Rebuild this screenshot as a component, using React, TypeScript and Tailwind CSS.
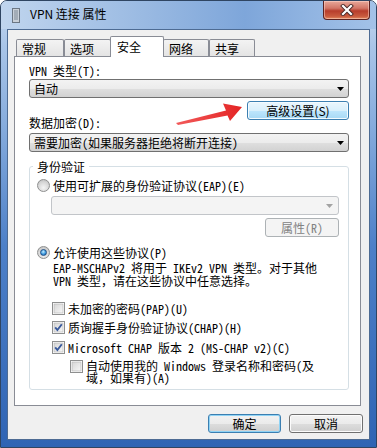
import React from 'react';

// SimSun-like metrics: half-width latin, full-width CJK
const sim = "font-['Noto_Sans_Mono_CJK_SC','Noto_Sans_CJK_SC','Noto_Sans',monospace]";
const ui = "font-['Noto_Sans_CJK_SC','Noto_Sans',sans-serif]";

const Combo: React.FC<{ text?: string; disabled?: boolean; className?: string }> = ({ text, disabled, className = '' }) => (
  <div
    className={`h-[19px] flex items-center rounded-[3px] border pl-[4px] pr-[4px] ${
      disabled
        ? 'border-[#c2c5c9] bg-[#f4f4f4] pr-[5px]'
        : 'border-[#707070] bg-[linear-gradient(#f3f3f3_0%,#ececec_50%,#dfdfdf_51%,#d2d2d2_100%)]'
    } ${className}`}
  >
    <span className="flex-1 leading-[13px] whitespace-nowrap">{text}</span>
    <svg width="7" height="4" viewBox="0 0 7 4">
      <path d="M0 0h7L3.5 4z" fill={disabled ? '#a3a3a3' : '#000'} />
    </svg>
  </div>
);

type BtnKind = 'hot' | 'default' | 'normal' | 'disabled';

const Btn: React.FC<{ kind: BtnKind; className?: string; children: React.ReactNode }> = ({ kind, className = '', children }) => {
  const look = {
    hot: 'border-[#3c7fb1] bg-[linear-gradient(#eaf6fd_0%,#d9f0fc_50%,#bee6fd_51%,#a7d9f5_100%)] shadow-[inset_0_0_0_1px_#f4fbff]',
    default: 'border-[#3c7fb1] bg-[linear-gradient(#f2f2f2_0%,#ebebeb_50%,#dddddd_51%,#cfcfcf_100%)] shadow-[inset_0_0_0_1px_#8fd3f5]',
    normal: 'border-[#707070] bg-[linear-gradient(#f2f2f2_0%,#ebebeb_50%,#dddddd_51%,#cfcfcf_100%)] shadow-[inset_0_0_0_1px_#fcfcfc]',
    disabled: 'border-[#adb2b5] bg-[#f4f4f4] text-[#838383]',
  }[kind];
  return (
    <div className={`h-[19px] flex items-center justify-center rounded-[3px] border leading-[13px] ${look} ${className}`}>
      {children}
    </div>
  );
};

const Radio: React.FC<{ checked?: boolean }> = ({ checked }) => (
  <span className="w-[13px] h-[13px] shrink-0 rounded-full border border-[#8e8f8f] bg-[radial-gradient(circle_at_50%_70%,#f4f4f4_0%,#d8d8d8_55%,#b9b9b9_100%)] flex items-center justify-center">
    {checked && (
      <span className="w-[7px] h-[7px] rounded-full border border-[#1f4f86] bg-[radial-gradient(circle_at_45%_35%,#c4ecfd_0%,#3d9ae0_55%,#17579e_100%)]" />
    )}
  </span>
);

const Check: React.FC<{ checked?: boolean }> = ({ checked }) => (
  <svg width="13" height="13" viewBox="0 0 13 13" className="shrink-0">
    <defs>
      <linearGradient id="cbg" x1="0" y1="0" x2="1" y2="1">
        <stop offset="0" stopColor="#d6d6d6" />
        <stop offset="1" stopColor="#f7f7f7" />
      </linearGradient>
    </defs>
    <rect x="0.5" y="0.5" width="12" height="12" fill="#fff" stroke="#8e8f8f" />
    <rect x="2" y="2" width="9" height="9" fill="url(#cbg)" stroke="#b3b3b3" strokeWidth="0.6" />
    {checked && <path d="M3.2 6.3 L5.4 9 L9.8 3.2" fill="none" stroke="#3a5a9c" strokeWidth="1.9" />}
  </svg>
);

const Tab: React.FC<{ label: string; w: string; active?: boolean }> = ({ label, w, active }) =>
  active ? (
    <div className={`${w} h-[21px] -mb-px relative z-10 -mx-px bg-white border border-b-0 border-[#898c95] rounded-t-[2px] pl-[6px] pt-[3px] leading-[13px]`}>
      {label}
    </div>
  ) : (
    <div className={`${w} h-[17px] bg-[linear-gradient(#f3f3f3,#e4e4e4)] border border-b-0 border-[#898c95] rounded-t-[2px] pl-[5px] pt-[2px] leading-[13px]`}>
      {label}
    </div>
  );

export default function App() {
  return (
    <div className="w-[377px] h-[448px] bg-white">
      <div
        className={`relative w-[377px] h-[448px] rounded-t-[7px] border border-[#2f4562] flex flex-col overflow-hidden text-[12px] text-black ${sim} bg-[linear-gradient(#c6d8ef_0%,#a9c5e8_10%,#86acdd_28%,#4d80c8_55%,#2f64b4_100%)]`}
      >
        {/* title bar */}
        <div className="h-[28px] shrink-0 flex items-start bg-[linear-gradient(90deg,#c0d5ee_0%,#9dbce3_35%,#7ea6da_65%,#a3c2e8_100%)]">
          <svg width="8" height="15" viewBox="0 0 8 15" className="ml-[11px] mt-[7px]">
            <rect x="0.5" y="0.5" width="7" height="14" fill="#c9d0d8" stroke="#6c7784" />
            <path d="M2 3h4M2 5h4M2 7h4M2 9h4M2 11h4" stroke="#7d8895" />
          </svg>
          <span className={`ml-[10px] mt-[6px] leading-[14px] text-[12px] text-black ${ui}`}>VPN 连接 属性</span>
          <div className="ml-auto mr-[6px] w-[47px] h-[19px] rounded-b-[4px] border border-t-0 border-[#5b2221] bg-[linear-gradient(#e8a89a_0%,#d27667_40%,#b73d2c_55%,#c95b3f_85%,#e48a5f_100%)] shadow-[inset_0_0_0_1px_rgba(255,220,210,0.5)] flex items-center justify-center">
            <svg width="14" height="12" viewBox="0 0 14 12">
              <path d="M3 2l8 8M11 2l-8 8" stroke="#4a2a28" strokeWidth="4" strokeLinecap="square" />
              <path d="M3 2l8 8M11 2l-8 8" stroke="#fff" strokeWidth="2.2" strokeLinecap="square" />
            </svg>
          </div>
        </div>

        {/* client area */}
        <div className="ml-[6px] w-[363px] h-[411px] border border-[#4d6b93] bg-[#f0f0f0] flex flex-col">
          <div className={`flex items-end pl-[8px] pt-[6px] ${ui}`}>
            <Tab label="常规" w="w-[48px]" />
            <Tab label="选项" w="w-[47px]" />
            <Tab label="安全" w="w-[54px]" active />
            <Tab label="网络" w="w-[46px]" />
            <Tab label="共享" w="w-[46px]" />
          </div>

          <div className="ml-[6px] w-[347px] h-[350px] border border-[#898c95] bg-white pl-[14px] pr-[11px] flex flex-col">
            <div className="mt-[7px] leading-[13px]">VPN 类型(T):</div>
            <Combo text="自动" className={`mt-[2px] ${ui}`} />
            <div className="mt-[3px] flex justify-end">
              <Btn kind="hot" className={`w-[102px] ${ui}`}>高级设置(S)</Btn>
            </div>
            <div className="-mt-[4px] leading-[13px]">数据加密(D):</div>
            <Combo text="需要加密(如果服务器拒绝将断开连接)" className="mt-[4px]" />

            <fieldset className="mt-[8px] w-[320px] border border-[#d5dfe5] rounded-[3px] p-0 m-0 min-w-0">
              <legend className={`ml-[3px] px-[4px] leading-[13px] ${ui}`}>身份验证</legend>
              <div className="pl-[7px] pr-[9px] pb-[5px] flex flex-col">
                <div className="mt-[6px] flex items-center gap-[3px] leading-[13px]">
                  <Radio />
                  <span className="whitespace-nowrap">使用可扩展的身份验证协议(EAP)(E)</span>
                </div>
                <Combo disabled className="mt-[4px] ml-[14px]" />
                <div className="mt-[3px] flex justify-end">
                  <Btn kind="disabled" className="w-[74px]">属性(R)</Btn>
                </div>
                <div className="mt-[9px] flex items-center gap-[3px] leading-[13px]">
                  <Radio checked />
                  <span className="whitespace-nowrap">允许使用这些协议(P)</span>
                </div>
                <div className="mt-[2px] ml-[16px] leading-[13px] whitespace-nowrap">
                  <div>EAP-MSCHAPv2 将用于 IKEv2 VPN 类型。对于其他</div>
                  <div>VPN 类型，请在这些协议中任意选择。</div>
                </div>
                <div className="mt-[15px] ml-[15px] flex items-center gap-[3px] leading-[13px]">
                  <Check />
                  <span className="whitespace-nowrap">未加密的密码(PAP)(U)</span>
                </div>
                <div className="mt-[6px] ml-[15px] flex items-center gap-[3px] leading-[13px]">
                  <Check checked />
                  <span className="whitespace-nowrap">质询握手身份验证协议(CHAP)(H)</span>
                </div>
                <div className="mt-[7px] ml-[15px] flex items-center gap-[3px] leading-[13px]">
                  <Check checked />
                  <span className="whitespace-nowrap">Microsoft CHAP 版本 2 (MS-CHAP v2)(C)</span>
                </div>
                <div className="mt-[6px] ml-[33px] flex items-start gap-[3px] leading-[12px]">
                  <Check />
                  <div className="whitespace-nowrap">
                    <div>自动使用我的 Windows 登录名称和密码(及</div>
                    <div>域，如果有)(A)</div>
                  </div>
                </div>
              </div>
            </fieldset>
          </div>

          <div className={`mt-[8px] flex justify-end gap-[8px] pr-[6px] ${ui}`}>
            <Btn kind="default" className="w-[73px]">确定</Btn>
            <Btn kind="normal" className="w-[74px]">取消</Btn>
          </div>
        </div>

        {/* red pointer arrow drawn over the dialog */}
        <svg className="absolute left-0 top-0 pointer-events-none" width="377" height="448" viewBox="0 0 377 448">
          <defs>
            <linearGradient id="arr" x1="0" y1="0" x2="1" y2="0">
              <stop offset="0" stopColor="#f25a5a" />
              <stop offset="1" stopColor="#e42424" />
            </linearGradient>
          </defs>
          <polygon points="175,122 225,109.5 222,102.5 241,106 229,120 226.5,114.5 177,124" fill="url(#arr)" />
        </svg>
      </div>
    </div>
  );
}
